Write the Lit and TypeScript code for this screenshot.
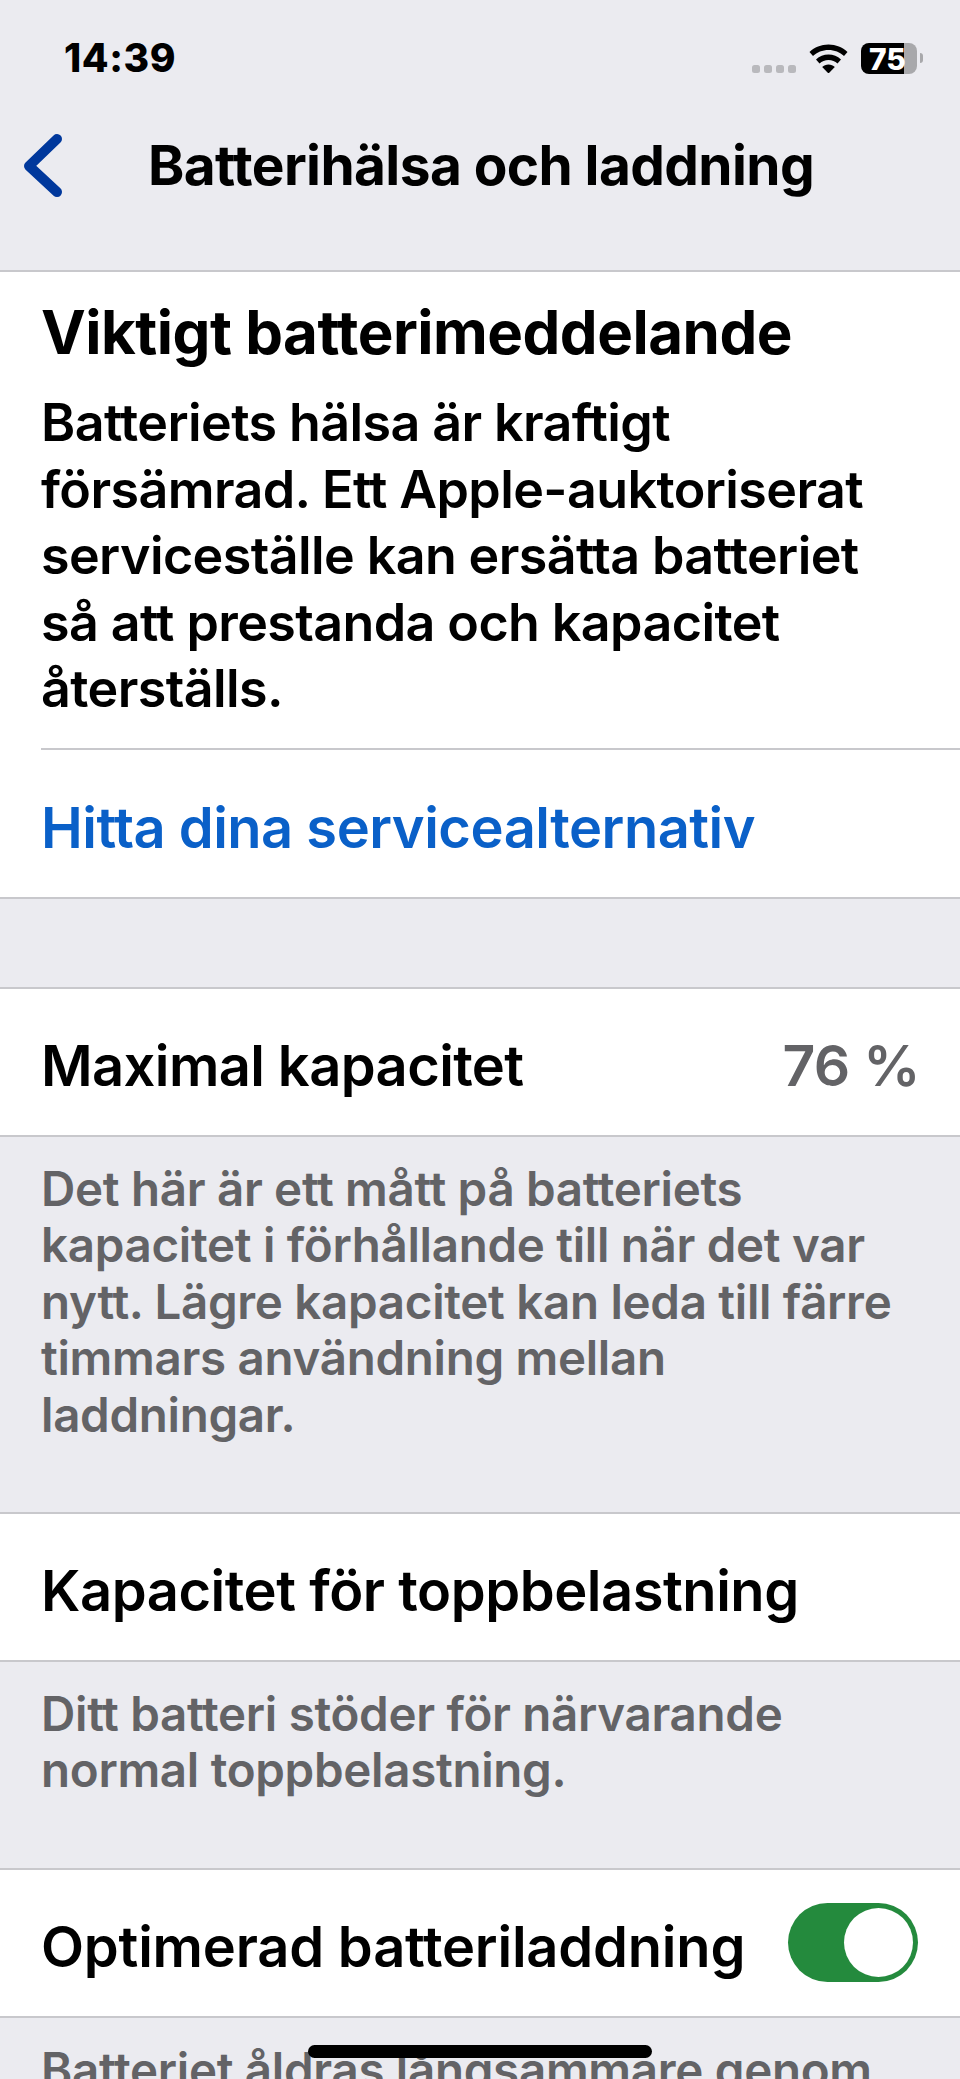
import { LitElement, html, css } from "lit";
import { customElement } from "lit/decorators.js";

@customElement("app-root")
export class AppRoot extends LitElement {
  static styles = css`
    :host { display: block; width: 960px; height: 2079px; overflow: hidden; position: relative; background: #ebebf0; font-family: Inter, "Noto Sans", sans-serif; color: #000; }
    .status { height: 112px; display: flex; justify-content: space-between; padding: 0 0 0 64px; box-sizing: border-box; }
    .time { font-size: 39px; font-weight: 800; line-height: 42px; margin-top: 37px; letter-spacing: 0.6px; }
    .icons { display: flex; align-items: flex-start; margin-top: 44px; margin-right: 37px; }
    .dots { display: flex; gap: 4px; margin-top: 21px; margin-right: 13px; }
    .dots i { width: 8px; height: 8px; border-radius: 2.5px; background: #b9b9bd; }
    .wifi { width: 39px; height: 29px; margin-right: 13px; }
    .batt { position: relative; width: 62px; height: 32px; margin-top: -1px; }
    .batt .body { position: absolute; left: 0; top: 0; width: 56px; height: 31px; border-radius: 8px; background: linear-gradient(90deg, #000 0 43px, #a8a8ab 43px); }
    .batt .num { position: absolute; left: 8px; top: 0; font-size: 30px; line-height: 32px; font-weight: 800; color: #fff; }
    .batt .nub { position: absolute; left: 59px; top: 10px; width: 3px; height: 10px; border-radius: 0 3px 3px 0; background: #a8a8ab; }
    .nav { height: 160px; display: flex; align-items: flex-start; box-sizing: border-box; border-bottom: 2px solid #c8c8cc; }
    .back { width: 40px; height: 64px; margin-left: 24px; margin-top: 21px; flex: none; }
    .title { font-size: 55px; font-weight: 700; line-height: 56px; margin-left: 84px; margin-top: 25px; white-space: nowrap; letter-spacing: -0.6px; }
    .card { background: #fff; }
    .card.b { border-top: 2px solid #c8c8cc; border-bottom: 2px solid #c8c8cc; }
    .notice { padding: 30px 0 0 41px; }
    .h { font-size: 60px; font-weight: 700; line-height: 60px; letter-spacing: -0.5px; white-space: nowrap; }
    .msg { font-size: 52px; line-height: 66.5px; font-weight: 600; margin-top: 28px; padding-bottom: 25px; white-space: pre-line; letter-spacing: -0.6px; }
    .div { height: 2px; background: #c8c8cc; }
    .link { color: #0a60c8; font-size: 56px; line-height: 56px; font-weight: 600; padding: 50px 0 41px; letter-spacing: -0.5px; }
    .row { height: 146px; display: flex; align-items: center; justify-content: space-between; padding: 8px 41px 0; box-sizing: border-box; font-size: 56px; font-weight: 600; letter-spacing: -0.6px; white-space: nowrap; }
    .row .wide { letter-spacing: -0.2px; }
    .row .mid { letter-spacing: -0.45px; }
    .val { color: #636366; font-size: 57px; margin-right: -1px; }
    .foot { color: #636366; font-size: 47.5px; line-height: 56.6px; font-weight: 600; padding: 24px 41px 0; white-space: pre-line; letter-spacing: -0.3px; }
    .f1 { height: 375px; box-sizing: border-box; }
    .f2 { height: 206px; box-sizing: border-box; }
    .gap { height: 88px; }
    .toggle { width: 130px; height: 79px; border-radius: 40px; background: #248a3d; position: relative; flex: none; margin-top: -8px; margin-right: 1px; }
    .toggle i { position: absolute; right: 5px; top: 5px; width: 69px; height: 69px; border-radius: 50%; background: #fff; }
    .home { position: absolute; left: 308px; top: 2045px; height: 13px; width: 344px; border-radius: 7px; background: #000; }
  `;

  render() {
    return html`
      <div class="status">
        <div class="time">14:39</div>
        <div class="icons">
          <div class="dots"><i></i><i></i><i></i><i></i></div>
          <svg class="wifi" viewBox="0 0 39 29"><path d="M19.5 0.5C12 0.5 5.5 3.3 0.5 8l3.5 4C8 8.300 13.500 6 19.500 6S31 8.300 35 12l3.500-4C33.500 3.300 27 0.500 19.500 0.500z" /><path d="M19.500 10.500c-4.800 0-9 1.800-12.500 5l3.500 4c2.400-2.200 5.500-3.500 9-3.500s6.600 1.300 9 3.500l3.500-4c-3.500-3.200-7.700-5-12.500-5z" /><path d="M19.500 20.500c-2.500 0-4.700.9-6.300 2.500l6.300 6.500 6.300-6.500c-1.600-1.600-3.800-2.500-6.300-2.500z" /></svg>
          <div class="batt"><div class="body"></div><div class="num">75</div><div class="nub"></div></div>
        </div>
      </div>
      <div class="nav">
        <svg class="back" viewBox="0 0 40 64" fill="none" stroke="#00389c" stroke-width="10" stroke-linecap="round" stroke-linejoin="round"><path d="M33 6L5 33l28 26" /></svg>
        <div class="title">Batterihälsa och laddning</div>
      </div>
      <div class="card">
        <div class="notice">
          <div class="h">Viktigt batterimeddelande</div>
          <div class="msg">Batteriets hälsa är kraftigt
försämrad. Ett Apple-auktoriserat
serviceställe kan ersätta batteriet
så att prestanda och kapacitet
återställs.</div>
          <div class="div"></div>
          <div class="link">Hitta dina servicealternativ</div>
        </div>
      </div>
      <div class="div"></div>
      <div class="gap"></div>
      <div class="card b"><div class="row"><span>Maximal kapacitet</span><span class="val">76 %</span></div></div>
      <div class="foot f1">Det här är ett mått på batteriets
kapacitet i förhållande till när det var
nytt. Lägre kapacitet kan leda till färre
timmars användning mellan
laddningar.</div>
      <div class="card b"><div class="row"><span class="mid">Kapacitet för toppbelastning</span></div></div>
      <div class="foot f2">Ditt batteri stöder för närvarande
normal toppbelastning.</div>
      <div class="card b"><div class="row"><span class="wide">Optimerad batteriladdning</span><div class="toggle"><i></i></div></div></div>
      <div class="foot">Batteriet åldras långsammare genom</div>
      <div class="home"></div>
    `;
  }
}
